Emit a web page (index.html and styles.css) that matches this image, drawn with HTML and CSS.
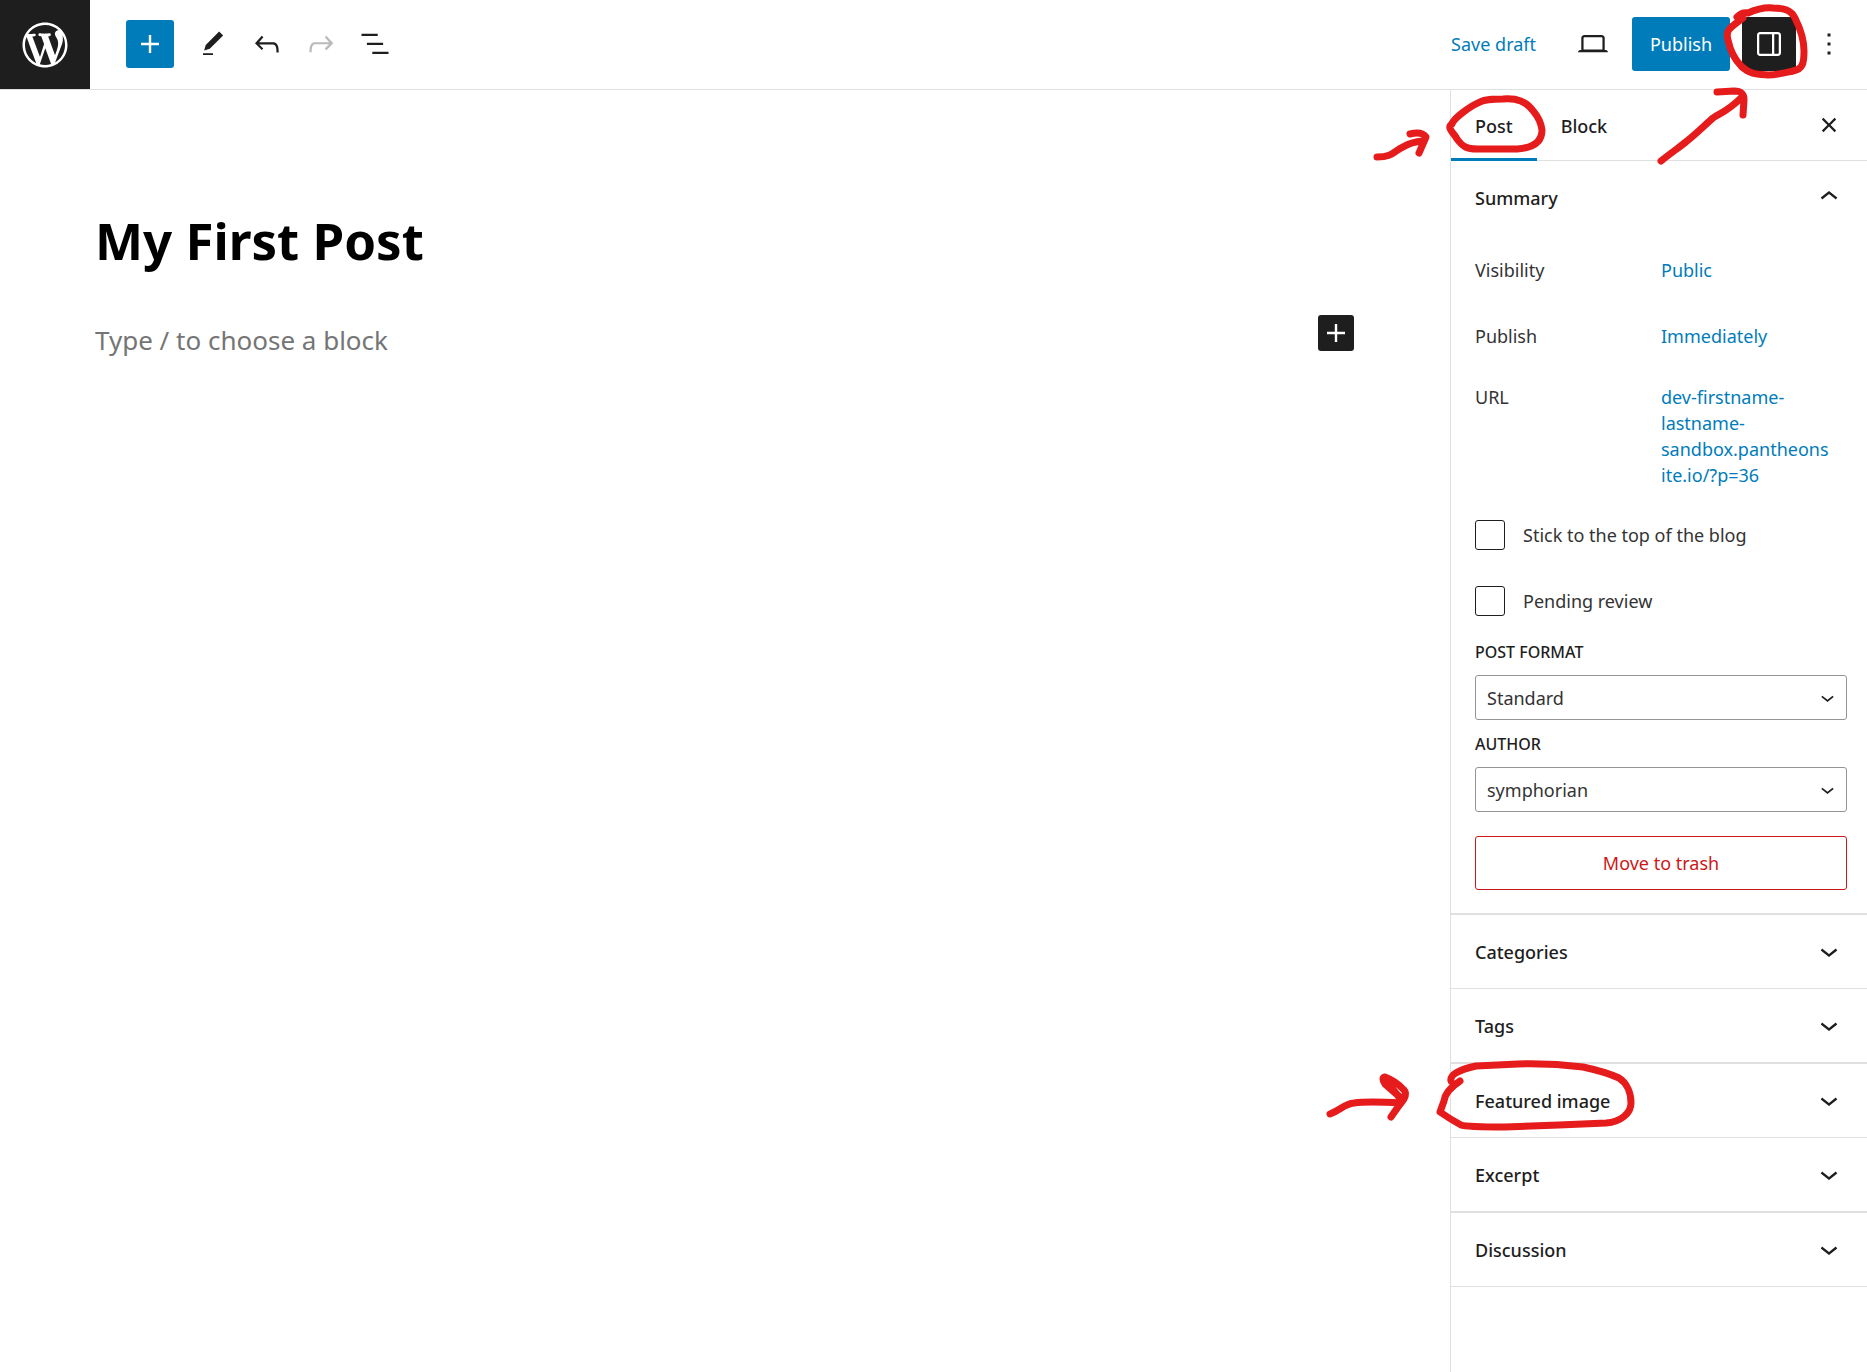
FILE: index.html
```html
<!DOCTYPE html>
<html lang="en">
<head>
<meta charset="utf-8">
<title>Edit Post</title>
<link rel="stylesheet" href="styles.css">
</head>
<body>
<div class="editor">
  <header class="topbar">
    <a class="site-logo" href="#" aria-label="View posts">
      <svg viewBox="-2 -2 24 24"><path d="M20 10c0-5.51-4.49-10-10-10C4.48 0 0 4.49 0 10c0 5.52 4.48 10 10 10 5.51 0 10-4.48 10-10zM7.78 15.37L4.37 6.22c.55-.02 1.17-.08 1.17-.08.5-.06.44-1.13-.06-1.11 0 0-1.45.11-2.37.11-.18 0-.37 0-.58-.01C4.12 2.69 6.87 1.11 10 1.11c2.33 0 4.45.87 6.05 2.34-.68-.11-1.65.39-1.65 1.58 0 .74.45 1.36.9 2.1.35.61.55 1.36.55 2.46 0 1.49-1.4 5-1.4 5l-3.03-8.37c.54-.02.82-.17.82-.17.5-.05.44-1.25-.06-1.22 0 0-1.44.12-2.38.12-.87 0-2.33-.12-2.33-.12-.5-.03-.56 1.2-.06 1.22l.92.08 1.26 3.41zM17.41 10c.24-.64.74-1.87.43-4.25.7 1.29 1.05 2.71 1.05 4.25 0 3.29-1.73 6.24-4.4 7.78.97-2.59 1.94-5.2 2.92-7.78zM6.1 18.09C3.12 16.65 1.11 13.53 1.11 10c0-1.3.23-2.48.72-3.59C3.25 10.3 4.67 14.2 6.1 18.09zm4.03-6.63l2.58 6.98c-.86.29-1.76.45-2.71.45-.79 0-1.57-.11-2.29-.33.81-2.38 1.62-4.74 2.42-7.1z"/></svg>
    </a>
    <div class="tools">
      <button class="inserter" aria-label="Toggle block inserter"><svg class="icon" viewBox="0 0 24 24"><path d="M18 11.2h-5.2V6h-1.6v5.2H6v1.6h5.2V18h1.6v-5.2H18z"/></svg></button>
      <button class="tool" aria-label="Tools"><svg class="icon icon-small" viewBox="0 0 24 24"><path d="M20.1 5.1L16.9 2 6.2 12.7l-1.3 4.4 4.5-1.3L20.1 5.1zM4 20.8h8v-1.5H4v1.5z"/></svg></button>
      <button class="tool" aria-label="Undo"><svg class="icon" viewBox="0 0 24 24"><path d="M18.3 11.7c-.6-.6-1.4-.9-2.3-.9H6.7l2.9-3.3-1.1-1-4.5 5L8.5 16l1-1-2.7-2.7H16c.5 0 .9.2 1.3.5 1 1 1 3.4 1 4.5v.3h1.5v-.2c0-1.5 0-4.3-1.5-5.7z"/></svg></button>
      <button class="tool" aria-label="Redo" disabled><svg class="icon" viewBox="0 0 24 24"><path d="M15.6 6.5l-1.1 1 2.9 3.3H8c-.9 0-1.7.3-2.3.9-1.4 1.5-1.4 4.2-1.4 5.6v.2h1.5v-.3c0-1.1 0-3.5 1-4.5.3-.3.7-.5 1.3-.5h9.2L14.5 15l1.1 1.1 4.6-4.6-4.6-5z"/></svg></button>
      <button class="tool" aria-label="Document overview"><svg class="icon" viewBox="0 0 24 24"><path d="M13.8 5.2H3v1.5h10.8V5.2zm-3.6 12v1.5H21v-1.5H10.2zm7.2-6H6.6v1.5h10.8v-1.5z"/></svg></button>
    </div>
    <div class="actions">
      <button class="save">Save draft</button>
      <button class="tool" aria-label="Preview"><svg class="icon" viewBox="0 0 24 24"><path d="M20.5 16h-.7V8c0-1.1-.9-2-2-2H6.2c-1.1 0-2 .9-2 2v8h-.7c-.8 0-1.5.7-1.5 1.5h20c0-.8-.7-1.5-1.5-1.5zM5.7 8c0-.3.2-.5.5-.5h11.6c.3 0 .5.2.5.5v7.6H5.7V8z"/></svg></button>
      <button class="publish">Publish</button>
      <button class="tool tool-on" aria-label="Settings" aria-pressed="true"><svg class="icon" viewBox="0 0 24 24"><path d="M18 4H6c-1.1 0-2 .9-2 2v12c0 1.1.9 2 2 2h12c1.1 0 2-.9 2-2V6c0-1.1-.9-2-2-2zm-4 14.5H6c-.3 0-.5-.2-.5-.5V6c0-.3.2-.5.5-.5h8v13zm4.5-.5c0 .3-.2.5-.5.5h-2.5v-13H18c.3 0 .5.2.5.5v12z"/></svg></button>
      <button class="tool more" aria-label="Options"><svg class="icon" viewBox="0 0 24 24"><path d="M13 19h-2v-2h2v2zm0-6h-2v-2h2v2zm0-6h-2V5h2v2z"/></svg></button>
    </div>
  </header>

  <div class="workspace">
    <main class="canvas">
      <h1 class="post-title">My First Post</h1>
      <div class="block-row">
        <input class="block-input" type="text" aria-label="Empty block" placeholder="Type / to choose a block">
        <button class="block-add" aria-label="Add block"><svg class="icon" viewBox="0 0 24 24"><path d="M18 11.2h-5.2V6h-1.6v5.2H6v1.6h5.2V18h1.6v-5.2H18z"/></svg></button>
      </div>
    </main>

    <aside class="sidebar">
      <div class="tabs">
        <button class="tab tab-active">Post</button>
        <button class="tab">Block</button>
        <button class="close" aria-label="Close settings"><svg class="icon" viewBox="0 0 24 24"><path d="M12 13.06l3.712 3.713 1.061-1.06L13.061 12l3.712-3.712-1.06-1.06L12 10.938 8.288 7.227l-1.061 1.06L10.939 12l-3.712 3.712 1.06 1.061L12 13.061z"/></svg></button>
      </div>

      <section class="summary">
        <button class="panel-toggle">Summary<svg class="icon" viewBox="0 0 24 24"><path d="M6.5 12.4L12 8l5.5 4.4-.9 1.2L12 10l-4.5 3.6-1-1.2z"/></svg></button>
        <div class="summary-body">
          <div class="row"><span>Visibility</span><a href="#">Public</a></div>
          <div class="row"><span>Publish</span><a href="#">Immediately</a></div>
          <div class="row row-url"><span>URL</span><a href="#">dev-firstname-lastname-sandbox.pantheonsite.io/?p=36</a></div>
          <label class="check"><input type="checkbox">Stick to the top of the blog</label>
          <label class="check"><input type="checkbox">Pending review</label>
          <div class="field">
            <label for="format">Post format</label>
            <div class="select-wrap">
              <select id="format"><option>Standard</option></select>
              <svg class="select-arrow" viewBox="0 0 24 24"><path d="M17.5 11.6L12 16l-5.5-4.4.9-1.2L12 14l4.5-3.6 1 1.2z"/></svg>
            </div>
          </div>
          <div class="field">
            <label for="author">Author</label>
            <div class="select-wrap">
              <select id="author"><option>symphorian</option></select>
              <svg class="select-arrow" viewBox="0 0 24 24"><path d="M17.5 11.6L12 16l-5.5-4.4.9-1.2L12 14l4.5-3.6 1 1.2z"/></svg>
            </div>
          </div>
          <button class="trash">Move to trash</button>
        </div>
      </section>

      <div class="panels">
        <button class="panel-toggle">Categories<svg class="icon" viewBox="0 0 24 24"><path d="M17.5 11.6L12 16l-5.5-4.4.9-1.2L12 14l4.5-3.6 1 1.2z"/></svg></button>
        <button class="panel-toggle">Tags<svg class="icon" viewBox="0 0 24 24"><path d="M17.5 11.6L12 16l-5.5-4.4.9-1.2L12 14l4.5-3.6 1 1.2z"/></svg></button>
        <button class="panel-toggle">Featured image<svg class="icon" viewBox="0 0 24 24"><path d="M17.5 11.6L12 16l-5.5-4.4.9-1.2L12 14l4.5-3.6 1 1.2z"/></svg></button>
        <button class="panel-toggle">Excerpt<svg class="icon" viewBox="0 0 24 24"><path d="M17.5 11.6L12 16l-5.5-4.4.9-1.2L12 14l4.5-3.6 1 1.2z"/></svg></button>
        <button class="panel-toggle">Discussion<svg class="icon" viewBox="0 0 24 24"><path d="M17.5 11.6L12 16l-5.5-4.4.9-1.2L12 14l4.5-3.6 1 1.2z"/></svg></button>
      </div>
    </aside>
  </div>

  <!-- Hand-drawn marks over the settings toggle, Post tab and Featured image panel -->
  <svg class="marks" viewBox="1307 0 560 1150" aria-hidden="true">
    <path d="M1737 17Q1742 12 1748 13C1757 9 1764 7 1773 8C1784 8 1791 10 1795 18C1800 28 1804 39 1804 51C1804 63 1803 69 1793 71C1784 73 1777 75 1768 75C1756 74 1750 74 1742 67C1734 59 1730 50 1728 40C1725 30 1730 28 1743 18"/>
    <path d="M1661 161C1672 152 1680 147 1687 141C1697 133 1706 124 1713 118C1720 113 1727 112 1742 97M1717 92L1734 91C1742 91 1744 94 1744 100L1743 115"/>
    <path d="M1503 99C1493 99 1485 99 1480 102C1470 106 1453 119 1452 124C1446 128 1454 133 1457 139C1463 147 1467 149 1477 149L1517 149C1533 148 1542 142 1542 130C1541 122 1539 118 1534 112C1526 101 1517 98 1503 99Z"/>
    <path d="M1377 157C1393 157 1394 151 1403 147Q1411 142 1423 141M1410 134Q1422 131 1426 137L1419 153"/>
    <path d="M1460 1081Q1445 1091 1444 1101L1440 1112Q1450 1119 1461 1125Q1466 1127 1505 1127L1559 1125L1606 1123C1621 1122 1631 1113 1631 1103C1631 1093 1627 1083 1619 1078Q1606 1072 1583 1067Q1550 1063 1518 1064L1476 1066Q1449 1072 1451 1081"/>
    <path d="M1330 1114C1341 1110 1344 1104 1354 1103Q1368 1101 1401 1103M1401 1098L1385 1084Q1381 1078 1385 1077Q1396 1081 1404 1090Q1407 1093 1404 1099Q1397 1108 1391 1117M1385 1079L1402 1101"/>
  </svg>
</div>
</body>
</html>
```
FILE: styles.css
```css
* {
  box-sizing: border-box;
}

body {
  margin: 0;
  background: #fff;
  color: #1e1e1e;
  font-family: "Noto Sans", "Open Sans", sans-serif;
  font-size: 18px;
  line-height: 26px;
}

button,
input,
select {
  font: inherit;
  color: inherit;
}

button {
  display: flex;
  align-items: center;
  justify-content: center;
  padding: 0;
  border: 0;
  background: none;
  cursor: pointer;
}

a {
  color: #007cba;
  text-decoration: none;
}

svg {
  fill: currentColor;
}

.icon {
  width: 36px;
  height: 36px;
  flex: none;
}

.icon-small {
  width: 30px;
  height: 30px;
}

.editor {
  position: relative;
  display: flex;
  flex-direction: column;
  min-height: 100vh;
  overflow-x: clip;
}

/* Top bar */
.topbar {
  display: flex;
  align-items: center;
  justify-content: space-between;
  height: 90px;
  padding-right: 11px;
  border-bottom: 1px solid #e0e0e0;
}

.site-logo {
  display: flex;
  align-items: center;
  justify-content: center;
  align-self: stretch;
  width: 90px;
  background: #1e1e1e;
  color: #fff;
}

.site-logo svg {
  width: 54px;
  height: 54px;
}

.tools,
.actions {
  display: flex;
  align-items: center;
  padding-bottom: 1px;
}

.tools {
  margin-left: 36px;
  margin-right: auto;
}

.tool {
  width: 54px;
  height: 54px;
  border-radius: 3px;
}

.tool:disabled {
  color: #bbb;
}

.inserter {
  width: 48px;
  height: 48px;
  margin-right: 12px;
  border-radius: 3px;
  background: #007cba;
  color: #fff;
}

.save {
  margin-right: 30px;
  color: #007cba;
}

.publish {
  width: 98px;
  height: 54px;
  margin: 0 12px;
  border-radius: 3px;
  background: #007cba;
  color: #fff;
}

.tool-on {
  background: #1e1e1e;
  color: #fff;
}

.more {
  margin-left: 6px;
}

/* Canvas */
.workspace {
  display: flex;
  flex: 1;
}

.canvas {
  flex: 1;
  min-width: 0;
  padding: 114px 96px 0 95px;
}

.post-title {
  margin: 0;
  color: #000;
  font-size: 51px;
  line-height: 72px;
  font-weight: 700;
}

.block-row {
  display: flex;
  align-items: flex-start;
  margin-top: 39px;
}

.block-input {
  flex: 1;
  min-width: 0;
  height: 50px;
  padding: 0;
  border: 0;
  outline: 0;
  background: none;
  font-size: 26px;
}

.block-input::placeholder {
  color: #757575;
  opacity: 1;
}

.block-add {
  width: 36px;
  height: 36px;
  border-radius: 3px;
  background: #1e1e1e;
  color: #fff;
}

/* Settings sidebar */
.sidebar {
  width: 417px;
  flex: none;
  border-left: 1px solid #e0e0e0;
}

.tabs {
  display: flex;
  height: 71px;
  padding-right: 20px;
  border-bottom: 1px solid #e0e0e0;
}

.tab {
  height: 71px;
  padding: 0 24px;
  font-weight: 500;
}

.tab-active {
  box-shadow: inset 0 -3px #007cba;
}

.close {
  align-self: center;
  margin-left: auto;
}

.panel-toggle {
  justify-content: space-between;
  width: 100%;
  height: 73px;
  padding: 0 20px 0 24px;
  font-weight: 500;
}

.panel-toggle .icon {
  margin-bottom: 2px;
}

.summary-body {
  display: flex;
  flex-direction: column;
  padding: 9px 20px 23px 24px;
  color: #333;
}

.row {
  display: flex;
  align-items: center;
  height: 54px;
  margin-bottom: 12px;
}

.row span {
  width: 186px;
  flex: none;
}

.row a {
  width: 172px;
  overflow-wrap: anywhere;
}

.row-url {
  align-items: flex-start;
  height: auto;
  margin-bottom: 32px;
  padding-top: 9px;
}

.check {
  display: flex;
  align-items: center;
  gap: 18px;
  margin-bottom: 36px;
}

.check input {
  appearance: none;
  width: 30px;
  height: 30px;
  margin: 0;
  border: 1px solid #1e1e1e;
  border-radius: 3px;
}

.check + .field {
  margin-top: -13px;
}

.field {
  margin-bottom: 11px;
}

.field label {
  display: block;
  margin-bottom: 10px;
  color: #1e1e1e;
  font-size: 16px;
  font-weight: 500;
  text-transform: uppercase;
}

.select-wrap {
  position: relative;
}

select {
  display: block;
  appearance: none;
  width: 100%;
  height: 45px;
  padding: 0 11px;
  border: 1px solid #949494;
  border-radius: 3px;
  background: #fff;
}

.select-arrow {
  position: absolute;
  top: 9px;
  right: 6px;
  width: 27px;
  height: 27px;
  color: #1e1e1e;
  pointer-events: none;
}

.trash {
  height: 54px;
  margin-top: 13px;
  border: 1px solid #cc1818;
  border-radius: 3px;
  color: #cc1818;
}

.panels {
  border-bottom: 1px solid #e0e0e0;
}

.panels .panel-toggle {
  box-sizing: content-box;
  width: auto;
  min-width: calc(100% - 44px);
  border-top: 1px solid #e0e0e0;
}

.panels .panel-toggle:nth-child(odd) {
  border-top-width: 2px;
}

.marks {
  position: absolute;
  top: 0;
  right: 0;
  width: 560px;
  height: 1150px;
  fill: none;
  stroke: #e61b1b;
  stroke-width: 7px;
  stroke-linecap: round;
  stroke-linejoin: round;
  pointer-events: none;
}
```
